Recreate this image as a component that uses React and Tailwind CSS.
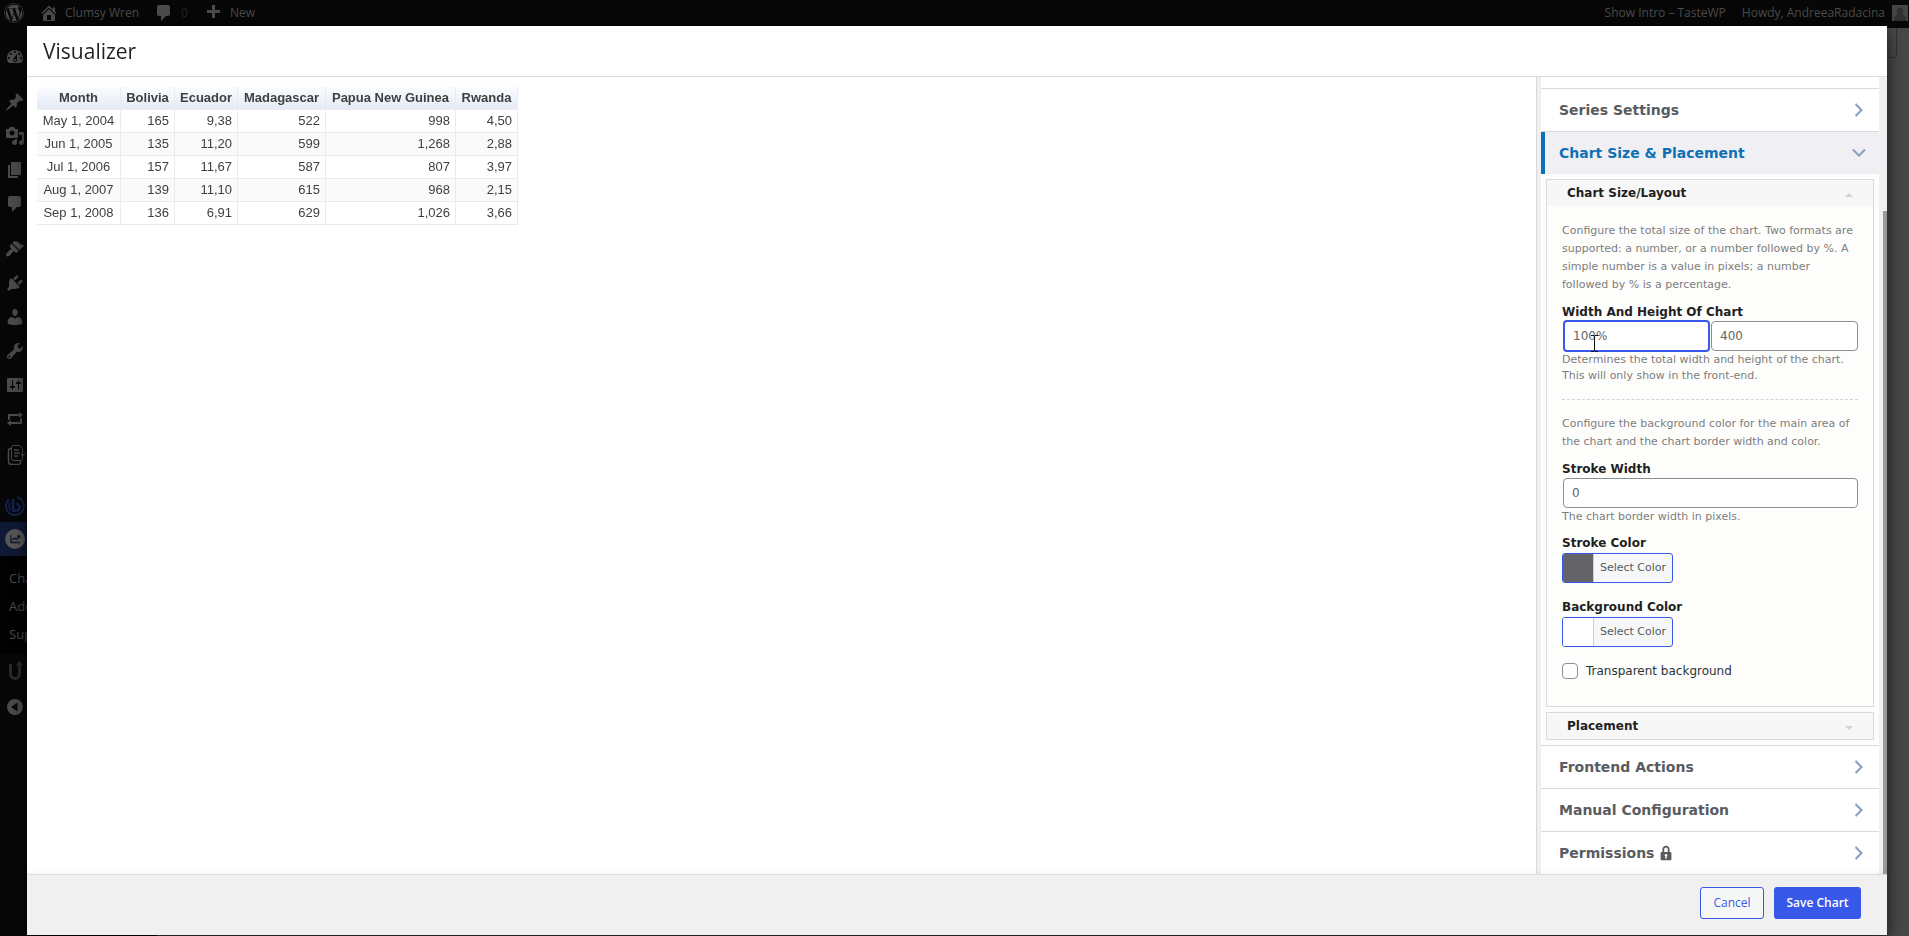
import { useState } from "react";
import clsx from "clsx";
import { FaWordpress } from "react-icons/fa";

const ICONS = {
  dashboard:
    "M3.76 16h12.48c1.1-1.37 1.76-3.11 1.76-5 0-4.42-3.58-8-8-8s-8 3.58-8 8c0 1.89.66 3.63 1.76 5zM10 4c.55 0 1 .45 1 1s-.45 1-1 1-1-.45-1-1 .45-1 1-1zM6 6c.55 0 1 .45 1 1s-.45 1-1 1-1-.45-1-1 .45-1 1-1zm8 0c.55 0 1 .45 1 1s-.45 1-1 1-1-.45-1-1 .45-1 1-1zm-5.37 5.55L12 7v6c0 1.1-.9 2-2 2s-2-.9-2-2c0-.57.24-1.08.63-1.45zM4 10c.55 0 1 .45 1 1s-.45 1-1 1-1-.45-1-1 .45-1 1-1zm12 0c.55 0 1 .45 1 1s-.45 1-1 1-1-.45-1-1 .45-1 1-1zm-5 3c0-.55-.45-1-1-1s-1 .45-1 1 .45 1 1 1 1-.45 1-1z",
  post: "M10.44 3.02l1.82-1.82 6.36 6.35-1.83 1.82c-1.05-.68-2.48-.57-3.41.36l-.75.75c-.92.93-1.04 2.35-.35 3.41l-1.83 1.82-2.41-2.41-2.8 2.79c-.42.42-3.38 2.71-3.8 2.29s1.86-3.39 2.28-3.81l2.79-2.79L4.1 9.36l1.83-1.82c1.05.69 2.48.57 3.4-.36l.75-.75c.93-.92 1.05-2.35.36-3.41z",
  media:
    "M13 11V4c0-.55-.45-1-1-1h-1.67L9 1H5L3.67 3H2c-.55 0-1 .45-1 1v7c0 .55.45 1 1 1h10c.55 0 1-.45 1-1zM7 4.5c1.38 0 2.5 1.12 2.5 2.5S8.38 9.5 7 9.5 4.5 8.38 4.5 7 5.62 4.5 7 4.5zM14 6h5v10.5c0 1.38-1.12 2.5-2.5 2.5S14 17.88 14 16.5s1.12-2.5 2.5-2.5c.17 0 .34.02.5.05V9h-3V6zm-4 8.05V13h2v3.5c0 1.38-1.12 2.5-2.5 2.5S7 17.88 7 16.5 8.12 14 9.5 14c.17 0 .34.02.5.05z",
  page: "M6 15V2h10v13H6zm-1 1h8v2H3V5h2v11z",
  comments:
    "M5 2h9c1.1 0 2 .9 2 2v7c0 1.1-.9 2-2 2h-2l-5 5v-5H5c-1.1 0-2-.9-2-2V4c0-1.1.9-2 2-2z",
  appearance:
    "M14.48 11.06L7.41 3.99l1.5-1.5c.5-.56 2.3-.47 3.51.32 1.21.8 1.43 1.28 2.91 2.1 1.18.64 2.45 1.26 4.45.85zm-.71.71L6.7 4.7 4.93 6.47c-.39.39-.39 1.02 0 1.41l1.06 1.06c.39.39.39 1.03 0 1.42-.6.6-1.43 1.11-2.21 1.69-.35.26-.7.53-1.01.84C1.43 14.23.4 16.08 1.4 17.07c.99 1 2.84-.03 4.18-1.36.31-.31.58-.66.85-1.02.57-.78 1.08-1.61 1.69-2.21.39-.39 1.02-.39 1.41 0l1.06 1.06c.39.39 1.02.39 1.41 0z",
  plugins:
    "M13.11 4.36L9.87 7.6 8 5.73l3.24-3.24c.35-.34 1.05-.2 1.56.32.52.51.66 1.21.31 1.55zm-8 1.77l.91-1.12 9.01 9.01-1.19.84c-.71.71-2.63 1.16-3.82 1.16H6.14L4.9 17.26c-.59.59-1.54.59-2.12 0-.59-.58-.59-1.53 0-2.12l1.24-1.24v-3.88c0-1.13.4-3.19 1.09-3.89zm7.26 3.97l3.24-3.24c.34-.35 1.04-.21 1.55.31.52.51.66 1.21.31 1.55l-3.24 3.25z",
  users:
    "M10 9.25c-2.27 0-2.73-3.44-2.73-3.44C7 4.02 7.82 2 9.97 2c2.16 0 2.98 2.02 2.71 3.81 0 0-.41 3.44-2.68 3.44zm0 2.57L12.72 10c2.39 0 4.52 2.33 4.52 4.53v2.49s-3.65 1.13-7.24 1.13c-3.65 0-7.24-1.13-7.24-1.13v-2.49c0-2.25 1.94-4.48 4.47-4.48z",
  tools:
    "M16.68 9.77c-1.34 1.34-3.3 1.67-4.95.99l-5.41 6.52c-.99.99-2.59.99-3.58 0s-.99-2.59 0-3.57l6.52-5.42c-.68-1.65-.35-3.61.99-4.95 1.28-1.28 3.12-1.62 4.72-1.06l-2.89 2.89 2.82 2.82 2.86-2.87c.53 1.58.18 3.39-1.08 4.65zM3.81 16.21c.4.39 1.04.39 1.43 0 .4-.4.4-1.04 0-1.43-.39-.4-1.03-.4-1.43 0-.39.39-.39 1.03 0 1.43z",
  settings:
    "M18 16V4c0-.55-.45-1-1-1H3c-.55 0-1 .45-1 1v12c0 .55.45 1 1 1h14c.55 0 1-.45 1-1zM8 11h1c.55 0 1 .45 1 1s-.45 1-1 1H8v1.5c0 .28-.22.5-.5.5s-.5-.22-.5-.5V13H6c-.55 0-1-.45-1-1s.45-1 1-1h1V5.5c0-.28.22-.5.5-.5s.5.22.5.5V11zm5-2h-1c-.55 0-1-.45-1-1s.45-1 1-1h1V5.5c0-.28.22-.5.5-.5s.5.22.5.5V7h1c.55 0 1 .45 1 1s-.45 1-1 1h-1v5.5c0 .28-.22.5-.5.5s-.5-.22-.5-.5V9z",
  repeat: "M5 7v3l-2 1.5V5h11V3l4 3.01L14 9V7H5zm10 6v-3l2-1.5V15H6v2l-4-3.01L6 11v2h9z",
  home: "M16 8.5l1.53 1.53-1.06 1.06L10 4.6l-6.47 6.49-1.06-1.06L10 2.5l4 4v-2h2v4zm-6-2.46l6 5.99V18H4v-5.97zM12 17v-5H8v5h4z",
  plus: "M17 7v3h-5v5H9v-5H4V7h5V2h3v5h5z",
  lock: "M14 9h1c.55 0 1 .45 1 1v7c0 .55-.45 1-1 1H5c-.55 0-1-.45-1-1v-7c0-.55.45-1 1-1h1V6c0-2.21 1.79-4 4-4s4 1.79 4 4v3zm-2 0V6c0-1.1-.9-2-2-2s-2 .9-2 2v3h4zm-1 7l-.36-2.15c.51-.24.86-.75.86-1.35 0-.83-.67-1.5-1.5-1.5s-1.5.67-1.5 1.5c0 .6.35 1.11.86 1.35L9 16h2z",
  right: "M6 15l5-5-5-5 1-2 7 7-7 7z",
  down: "M5 6l5 5 5-5 2 1-7 7-7-7z",
  collapse: "M10 2a8 8 0 1 0 0 16 8 8 0 0 0 0-16zm2.5 3.5v9L6 10z",
};

function Icon({ name, className = "size-5" }) {
  return (
    <svg viewBox="0 0 20 20" fill="currentColor" className={clsx("shrink-0", className)} aria-hidden="true">
      <path fillRule="evenodd" d={ICONS[name]} />
    </svg>
  );
}

function PagesIcon() {
  return (
    <svg viewBox="0 0 20 20" fill="none" stroke="currentColor" className="size-5 shrink-0" aria-hidden="true">
      <path d="M6.500 2.500a2 2 0 0 1 2-2h6l3 3v10a2 2 0 0 1-2 2h-7a2 2 0 0 1-2-2z" />
      <path d="M6.500 3.500h-1a2 2 0 0 0-2 2v11a3 3 0 0 0 3 3h7a2 2 0 0 0 2-2v-2" strokeWidth="1.5" />
      <path d="M9 5h5M9 8h6M9 11h4" strokeWidth="1.5" />
      <path d="M16 9l2 2 3-4" />
    </svg>
  );
}

function SwirlIcon() {
  return (
    <svg viewBox="0 0 20 20" fill="none" stroke="#14224f" strokeWidth="2" className="size-5 shrink-0" aria-hidden="true">
      <path d="M12 1.3a9 9 0 1 1-8 2" />
      <path d="M8 3v8.5a3.300 3.300 0 1 0 3.300-3.500" strokeWidth="2.5" />
      <path d="M4.500 6.500c-1.500 5 1 9 5.500 9" strokeWidth="1.5" />
    </svg>
  );
}

function ChartBadge() {
  return (
    <svg viewBox="0 0 20 20" className="size-5 shrink-0" aria-hidden="true">
      <circle cx="10" cy="10" r="10" fill="#575757" />
      <path d="M6 6v7.5h9M7.500 11l2-2 2 1.500L14 7.500M12 7h2.500v2.500" fill="none" stroke="#10182f" strokeWidth="1.3" />
    </svg>
  );
}

function HookIcon() {
  return (
    <svg viewBox="0 0 20 20" fill="none" stroke="currentColor" strokeWidth="3" className="size-5 shrink-0" aria-hidden="true">
      <path d="M5.500 3v10a4.500 4.500 0 0 0 9 0V3" />
      <path d="M12 4.500L14.500 1.500 17 4.500" strokeWidth="2" />
    </svg>
  );
}

function MenuRow({ children, className = "h-[34px]" }) {
  return (
    <a href="#" className={clsx("flex items-center pl-[5px]", className)}>
      {children}
    </a>
  );
}

function AdminMenu() {
  return (
    <nav aria-label="Admin menu" className="w-[157px] shrink-0 bg-[#070707] pt-3 text-[#4b4b4b]">
      <MenuRow><Icon name="dashboard" /></MenuRow>
      <div className="mt-[11px]">
        {["post", "media", "page", "comments"].map((name) => (
          <MenuRow key={name}><Icon name={name} /></MenuRow>
        ))}
      </div>
      <div className="mt-[11px]">
        {["appearance", "plugins", "users", "tools", "settings", "repeat"].map((name) => (
          <MenuRow key={name}><Icon name={name} /></MenuRow>
        ))}
        <MenuRow className="h-[38px]"><PagesIcon /></MenuRow>
      </div>
      <div className="mt-[15px]">
        <MenuRow className="h-[33px]"><SwirlIcon /></MenuRow>
        <MenuRow className="h-[34px] bg-[#0f1835]"><ChartBadge /></MenuRow>
        <div className="bg-[#020202] pt-2 pb-[6px] pl-[9px] text-[13px] leading-7">
          <a href="#" className="block">Chart Library</a>
          <a href="#" className="block">Add New Chart</a>
          <a href="#" className="block">Support</a>
        </div>
        <MenuRow className="h-[34px] text-[#2b2b2b]"><HookIcon /></MenuRow>
        <MenuRow className="h-[38px]"><Icon name="collapse" /></MenuRow>
      </div>
    </nav>
  );
}

function AdminBar() {
  return (
    <header className="flex h-7 shrink-0 items-start justify-between bg-[#070707] text-[12px] leading-[26px] text-[#4b4b4b]">
      <div className="flex h-[25px] items-center pl-1">
        <FaWordpress className="size-5" />
        <a href="#" className="ml-[15px] flex items-center gap-[6px]">
          <Icon name="home" />
          Clumsy Wren
        </a>
        <a href="#" className="ml-[15px] flex items-center gap-[7px]">
          <Icon name="comments" />
          <span className="text-[#20232e]">0</span>
        </a>
        <a href="#" className="ml-[15px] flex items-center gap-[7px]">
          <Icon name="plus" />
          New
        </a>
      </div>
      <div className="flex items-center gap-4">
        <a href="#">Show Intro – TasteWP</a>
        <a href="#" className="flex items-center gap-[7px] pr-px">
          Howdy, AndreeaRadacina
          <svg viewBox="0 0 16 16" className="size-4" aria-hidden="true">
            <path fill="#454545" d="M0 0h16v16H0z" />
            <path fill="#303030" d="M8 2.500a3.300 3.300 0 0 1 2 6c2 .8 3.500 2.500 4 5.500v2H2v-2c.5-3 2-4.700 4-5.500a3.300 3.300 0 0 1 2-6z" />
          </svg>
        </a>
      </div>
    </header>
  );
}

const COLUMNS = [
  { name: "Month", width: "w-[84px]" },
  { name: "Bolivia", width: "w-[54px]" },
  { name: "Ecuador", width: "w-[63px]" },
  { name: "Madagascar", width: "w-[88px]" },
  { name: "Papua New Guinea", width: "w-[130px]" },
  { name: "Rwanda", width: "w-[62px]" },
];

const ROWS = [
  ["May 1, 2004", "165", "9,38", "522", "998", "4,50"],
  ["Jun 1, 2005", "135", "11,20", "599", "1,268", "2,88"],
  ["Jul 1, 2006", "157", "11,67", "587", "807", "3,97"],
  ["Aug 1, 2007", "139", "11,10", "615", "968", "2,15"],
  ["Sep 1, 2008", "136", "6,91", "629", "1,026", "3,66"],
];

function ChartTable() {
  return (
    <table className="table-fixed w-[481px] border-separate border-spacing-0 font-['Liberation_Sans',Arial,sans-serif] text-[13px] leading-[22px] text-[#3f3f3f]">
      <thead>
        <tr>
          {COLUMNS.map((col) => (
            <th
              key={col.name}
              className={clsx(
                "whitespace-nowrap border-r border-b border-[#ebebeb] bg-linear-to-b from-[#fbfcff] to-[#e4eaf6] p-0 text-center font-bold",
                col.width
              )}
            >
              {col.name}
            </th>
          ))}
        </tr>
      </thead>
      <tbody>
        {ROWS.map((row) => (
          <tr key={row[0]} className="even:bg-[#fafafa]">
            {row.map((cell, i) => (
              <td
                key={i}
                className={clsx("border-r border-b border-[#ebebeb] px-[5px]", i === 0 ? "text-center" : "text-right")}
              >
                {cell}
              </td>
            ))}
          </tr>
        ))}
      </tbody>
    </table>
  );
}

function SectionButton({ title, open, locked, last }) {
  return (
    <button
      type="button"
      aria-expanded={!!open}
      className={clsx(
        "flex w-full items-center justify-between pr-[10px] text-left text-[14px] font-bold",
        open
          ? "h-[42px] border-l-4 border-[#0f71b4] bg-[#f0f0f4] pl-[14px] text-[#0f71b4]"
          : "bg-white pl-[18px] text-[#595b60]",
        !open && (last ? "h-[42px]" : "h-[43px] border-b border-[#dbdbdb]")
      )}
    >
      <span className="flex items-center gap-[3px]">
        {title}
        {locked && <Icon name="lock" className="size-[18px]" />}
      </span>
      <span className="text-[#8aa0bf]">
        <Icon name={open ? "down" : "right"} />
      </span>
    </button>
  );
}

function Note({ children }) {
  return <p className="text-[11px] leading-[18px] text-[#7d7d7d]">{children}</p>;
}

function Hint({ children }) {
  return <p className="text-[11px] leading-4 text-[#7d7d7d]">{children}</p>;
}

function ColorField({ label, swatch }) {
  return (
    <div role="group" aria-label={label}>
      <div className="text-[12px] leading-5 font-bold text-[#1f1f1f]">{label}</div>
      <button
        type="button"
        className="flex h-[30px] items-stretch overflow-hidden rounded-[3px] border border-[#3858e9] bg-[#f6f8f8] text-[11px] text-[#595b60]"
      >
        <span className={clsx("w-[30px]", swatch)} />
        <span className="flex w-[79px] items-center justify-center border-l border-[#cfcfcf]">Select Color</span>
      </button>
    </div>
  );
}

function SizeForm() {
  const [width, setWidth] = useState("100%");
  const [height, setHeight] = useState("400");
  const [stroke, setStroke] = useState("0");
  const [transparent, setTransparent] = useState(false);

  return (
    <div className="px-[15px] pt-4 pb-[27px]">
      <Note>
        Configure the total size of the chart. Two formats are supported: a number, or a number followed by %. A
        simple number is a value in pixels; a number followed by % is a percentage.
      </Note>
      <label htmlFor="chart-width" className="mt-[10px] block text-[12px] leading-4 font-bold text-[#1f1f1f]">
        Width And Height Of Chart
      </label>
      <div className="grid grid-cols-2 gap-px pl-px">
        <div className="relative">
          <input
            id="chart-width"
            value={width}
            onChange={(e) => setWidth(e.target.value)}
            className="h-8 w-full rounded border-2 border-[#3858e9] bg-white px-2 text-[12px] text-[#646468] outline-none"
          />
          {/* pointer resting on the field */}
          <svg viewBox="0 0 7 17" className="absolute top-[15px] left-7 h-[17px] w-[7px]" aria-hidden="true">
            <path d="M0 .5h3M4 .5h3M3.500 1v15M0 16.500h3M4 16.500h3" stroke="#111" fill="none" />
          </svg>
        </div>
        <input
          aria-label="Height of chart"
          value={height}
          onChange={(e) => setHeight(e.target.value)}
          className="my-px h-[30px] w-full rounded border border-[#8c8f94] bg-white px-2 text-[12px] text-[#646468] outline-none"
        />
      </div>
      <Hint>Determines the total width and height of the chart. This will only show in the front-end.</Hint>
      <hr className="my-[15px] border-dashed border-[#d4d4d4]" />
      <Note>Configure the background color for the main area of the chart and the chart border width and color.</Note>
      <label htmlFor="stroke-width" className="mt-[10px] block text-[12px] leading-4 font-bold text-[#1f1f1f]">
        Stroke Width
      </label>
      <div className="py-px pl-px">
        <input
          id="stroke-width"
          value={stroke}
          onChange={(e) => setStroke(e.target.value)}
          className="block h-[30px] w-full rounded border border-[#8c8f94] bg-white px-2 text-[12px] text-[#646468] outline-none"
        />
      </div>
      <Hint>The chart border width in pixels.</Hint>
      <div className="mt-2 flex flex-col gap-[14px]">
        <ColorField label="Stroke Color" swatch="bg-[#646468]" />
        <ColorField label="Background Color" swatch="bg-white" />
      </div>
      <label className="mt-4 flex items-center gap-2 text-[12px] leading-4 text-[#2c3338]">
        <input
          type="checkbox"
          checked={transparent}
          onChange={(e) => setTransparent(e.target.checked)}
          className="size-4 appearance-none rounded border border-[#8c8f94] bg-white"
        />
        Transparent background
      </label>
    </div>
  );
}

function PanelTitle({ title, open }) {
  return (
    <button
      type="button"
      aria-expanded={!!open}
      className="flex h-[26px] w-full items-center justify-between bg-[#f7f7f7] pr-5 pl-5 text-left text-[12px] font-bold text-[#1f1f1f]"
    >
      {title}
      <svg viewBox="0 0 8 4" className="mt-1 h-1 w-2" fill="#d0d2d4" aria-hidden="true">
        <path d={open ? "M0 4l4-4 4 4z" : "M0 0l4 4 4-4z"} />
      </svg>
    </button>
  );
}

function Settings() {
  return (
    <aside className="flex w-[351px] shrink-0 overflow-hidden border-l border-[#d8d8d8] bg-[#f0f0f0] pl-1">
      <div className="w-[338px] bg-[#fdfefc]">
        <div className="h-3 border-b border-[#dbdbdb] bg-white" />
        <SectionButton title="Series Settings" />
        <SectionButton title="Chart Size & Placement" open />
        <div className="flex flex-col gap-[5px] border-b border-[#dbdbdb] p-[5px]">
          <section className="border border-[#dbdbdb]">
            <PanelTitle title="Chart Size/Layout" open />
            <SizeForm />
          </section>
          <section className="border border-[#dbdbdb]">
            <PanelTitle title="Placement" />
          </section>
        </div>
        <SectionButton title="Frontend Actions" />
        <SectionButton title="Manual Configuration" />
        <SectionButton title="Permissions" locked last />
      </div>
      <div className="ml-auto w-1 pt-[134px]">
        <div className="h-full bg-[#999]" />
      </div>
    </aside>
  );
}

function VisualizerModal() {
  return (
    <div
      role="dialog"
      aria-labelledby="modal-title"
      className="fixed top-[26px] right-[22px] bottom-px left-[27px] flex flex-col bg-white shadow-[0_5px_15px_rgba(0,0,0,0.7)]"
    >
      <header className="flex h-[51px] shrink-0 items-center border-b border-[#dbdbdb] px-4">
        <h1 id="modal-title" className="pt-px text-[21px] text-[#1f2226]">Visualizer</h1>
      </header>
      <div className="flex min-h-0 flex-1 font-['DejaVu_Sans',Verdana,sans-serif]">
        <main className="flex-1 overflow-hidden px-[10px] py-[10px]">
          <ChartTable />
        </main>
        <Settings />
      </div>
      <footer className="flex shrink-0 justify-end gap-[10px] border-t border-[#dbdbdb] bg-[#f0f0f0] pt-3 pr-[26px] pb-4 text-[12px] shadow-[0_-2px_4px_rgba(0,0,0,0.04)]">
        <button type="button" className="h-8 w-16 rounded-[3px] border border-[#3858e9] bg-[#f6f8f8] text-[#3858e9]">
          Cancel
        </button>
        <button type="button" className="h-8 w-[87px] rounded-[3px] bg-[#3858e9] font-semibold text-white">
          Save Chart
        </button>
      </footer>
    </div>
  );
}

export default function App() {
  return (
    <div className="flex min-h-screen flex-col bg-[#484848] font-['Open_Sans','Noto_Sans',sans-serif]">
      <AdminBar />
      <div className="flex flex-1">
        <AdminMenu />
        <div className="flex flex-1 items-start justify-end pr-3">
          <div className="h-[30px] w-24 rounded-b border border-t-0 border-[#333]" />
        </div>
      </div>
      <VisualizerModal />
    </div>
  );
}
